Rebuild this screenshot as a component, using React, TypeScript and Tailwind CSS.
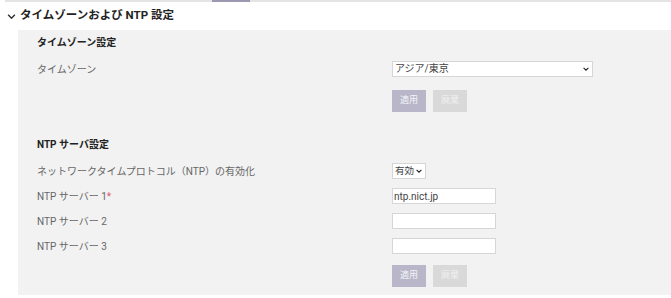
import React from 'react';

const fontStack = "font-['Roboto','Noto_Sans_CJK_JP',sans-serif]";

const Chevron = ({ className }: { className?: string }) => (
  <svg viewBox="0 0 10 6" className={className} fill="none" stroke="currentColor" strokeWidth="1.8">
    <path d="M1 1l4 4 4-4" />
  </svg>
);

const SelectBox = ({ value, width, small }: { value: string; width: string; small?: boolean }) => (
  <div
    className={`relative flex h-[16px] items-center whitespace-nowrap border border-[#d6d6d6] bg-white pl-[2px] text-[#444] ${
      small ? 'text-[9.5px]' : 'text-[10px]'
    } ${width}`}
  >
    <span className="leading-none">{value}</span>
    <Chevron className="absolute right-[3px] top-[5px] h-[4px] w-[6px] text-[#222]" />
  </div>
);

const TextBox = ({ value = '' }: { value?: string }) => (
  <input
    readOnly
    value={value}
    className="h-[16px] w-[104px] border border-[#d6d6d6] bg-white px-[1px] text-[10px] text-[#444] outline-none"
  />
);

const ActionButtons = ({ className }: { className?: string }) => (
  <div className={`ml-[355px] flex gap-[7px] ${className ?? ''}`}>
    <button className="h-[22px] w-[34px] bg-[#b8b6c8] text-[9px] text-[#f4f4f8]">適用</button>
    <button className="h-[22px] w-[34px] bg-[#d9d9d9] text-[9px] text-[#f0f0f0]">廃棄</button>
  </div>
);

const Row = ({ label, children, className }: { label: React.ReactNode; children: React.ReactNode; className?: string }) => (
  <div className={`flex items-center ${className ?? ''}`}>
    <div className="w-[355px] text-[10px] text-[#666]">{label}</div>
    {children}
  </div>
);

export default function App() {
  return (
    <div className={`h-[298px] w-[671px] overflow-hidden bg-white ${fontStack}`}>
      {/* tab indicator line */}
      <div className="ml-[5px] h-[2px] bg-[#e4e4e4]">
        <div className="ml-[207px] h-[2px] w-[38px] bg-[#9c98af]" />
      </div>

      {/* section header */}
      <div className="flex h-[28px] items-center pl-[7px]">
        <Chevron className="h-[5px] w-[9px] text-[#333]" />
        <h2 className="ml-[4px] text-[11.5px] font-bold text-[#222]">タイムゾーンおよび NTP 設定</h2>
      </div>

      <div className="ml-[18px] h-[265px] bg-[#f2f2f2] pl-[19px] pt-[5px]">
        <h3 className="h-[16px] text-[10px] font-bold leading-[16px] text-[#222]">タイムゾーン設定</h3>
        <Row label="タイムゾーン" className="mt-[10px]">
          <SelectBox value="アジア/東京" width="w-[201px]" />
        </Row>
        <ActionButtons className="mt-[13px]" />

        <h3 className="mt-[25px] h-[16px] text-[10px] font-bold leading-[16px] text-[#222]">NTP サーバ設定</h3>
        <Row label="ネットワークタイムプロトコル（NTP）の有効化" className="mt-[10px]">
          <SelectBox value="有効" width="w-[34px]" small />
        </Row>
        <Row
          label={
            <>
              NTP サーバー 1<span className="text-[#e05a6a]">*</span>
            </>
          }
          className="mt-[9px]"
        >
          <TextBox value="ntp.nict.jp" />
        </Row>
        <Row label="NTP サーバー 2" className="mt-[9px]">
          <TextBox />
        </Row>
        <Row label="NTP サーバー 3" className="mt-[9px]">
          <TextBox />
        </Row>
        <ActionButtons className="mt-[11px]" />
      </div>
    </div>
  );
}
